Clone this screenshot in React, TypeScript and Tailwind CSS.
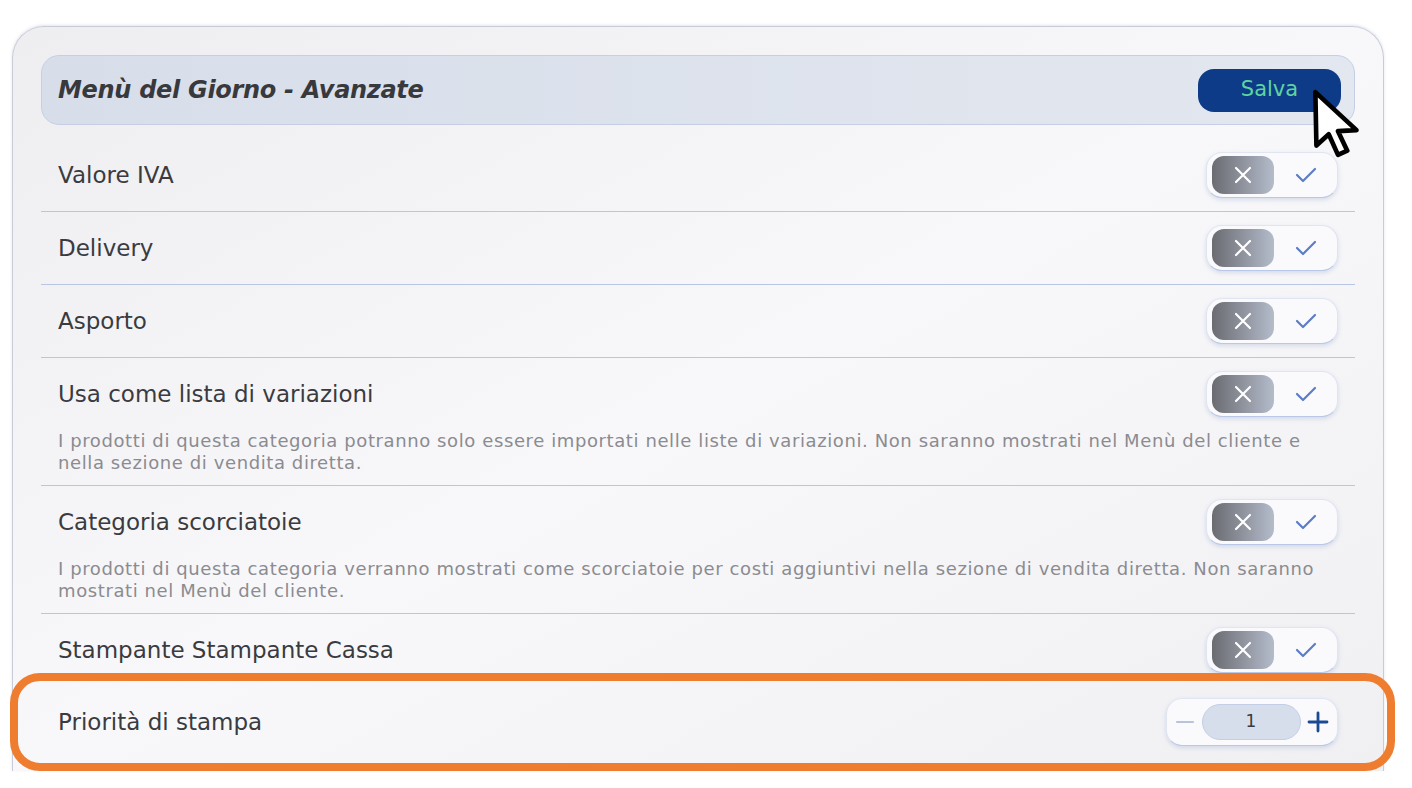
import React from 'react';

const font = { fontFamily: '"DejaVu Sans", "Open Sans", sans-serif' };

const XIcon = () => (
  <svg width="20" height="20" viewBox="0 0 20 20" fill="none">
    <path d="M3 3 L17 17 M17 3 L3 17" stroke="white" strokeWidth="2.2" strokeLinecap="round" />
  </svg>
);

const CheckIcon = () => (
  <svg width="22" height="18" viewBox="0 0 22 18" fill="none">
    <path d="M2 9 L8 15 L20 3" stroke="#5a7ec6" strokeWidth="2.2" strokeLinecap="round" strokeLinejoin="round" />
  </svg>
);

const Toggle = () => (
  <div className="flex h-[46px] w-[132px] shrink-0 items-center rounded-[16px] border border-[#dfe5f1] border-b-[#b9c8e6] bg-[#fafafc] pl-[5px] shadow-[0_2px_4px_rgba(120,140,190,0.25)]">
    <div className="flex h-[38px] w-[62px] items-center justify-center rounded-[12px] bg-gradient-to-r from-[#6b6c72] to-[#b4bccb]">
      <XIcon />
    </div>
    <div className="flex flex-1 items-center justify-center">
      <CheckIcon />
    </div>
  </div>
);

const Stepper = () => (
  <div className="flex h-[48px] w-[172px] shrink-0 items-center justify-between rounded-[16px] border border-[#dfe5f1] border-b-[#b9c8e6] bg-[#fafafc] px-[8px] shadow-[0_2px_4px_rgba(120,140,190,0.25)]">
    <svg width="20" height="20" viewBox="0 0 20 20">
      <path d="M2 10 H18" stroke="#b8c4da" strokeWidth="2.2" strokeLinecap="round" />
    </svg>
    <div className="flex h-[36px] w-[99px] items-center justify-center rounded-full border border-[#c3cfe6] bg-[#d6deeb] text-[17px] text-[#3a3b40]">
      1
    </div>
    <svg width="22" height="22" viewBox="0 0 22 22">
      <path d="M2 11 H20 M11 2 V20" stroke="#1b4a94" strokeWidth="2.8" strokeLinecap="round" />
    </svg>
  </div>
);

type Row = { label: string; desc?: string };

const rows: Row[] = [
  { label: 'Valore IVA' },
  { label: 'Delivery' },
  { label: 'Asporto' },
  {
    label: 'Usa come lista di variazioni',
    desc: 'I prodotti di questa categoria potranno solo essere importati nelle liste di variazioni. Non saranno mostrati nel Menù del cliente e nella sezione di vendita diretta.',
  },
  {
    label: 'Categoria scorciatoie',
    desc: 'I prodotti di questa categoria verranno mostrati come scorciatoie per costi aggiuntivi nella sezione di vendita diretta. Non saranno mostrati nel Menù del cliente.',
  },
  { label: 'Stampante Stampante Cassa' },
];

export default function App() {
  return (
    <div className="min-h-[788px] w-[1412px] bg-white pt-[26px] pl-[12px]" style={font}>
      <div className="relative w-[1372px] rounded-t-[32px] border border-b-0 border-[#c9ccd8] bg-gradient-to-br from-[#eeeef1] via-[#f8f8fa] to-[#f0f0f3] px-[28px] pt-[28px] shadow-[0_-1px_3px_rgba(140,150,180,0.25)]">
        {/* header */}
        <div className="flex h-[70px] items-center justify-between rounded-[18px] border border-[#c4cfe6] bg-gradient-to-r from-[#d7deea] to-[#e3e7ef] pl-[16px] pr-[13px]">
          <h1 className="text-[24px] font-bold italic tracking-[-0.3px] text-[#38393d]">Menù del Giorno - Avanzate</h1>
          <button className="h-[43px] w-[143px] rounded-[16px] bg-[#0e3b87] text-[21px] text-[#5fd3a0]">Salva</button>
        </div>
        <svg className="absolute left-[1299px] top-[62px]" width="52" height="72" viewBox="0 0 50 70">
          <path
            d="M3 3 L4 55 L16 44 L25 64 L34 60 L25 41 L43 40 Z"
            fill="white"
            stroke="black"
            strokeWidth="4.5"
            strokeLinejoin="round"
          />
        </svg>

        {/* rows */}
        <div className="mt-[14px] flex flex-col">
          {rows.map((r, i) => (
            <div
              key={r.label}
              className={`flex flex-col pt-[13px] ${r.desc ? 'pb-[11px]' : 'pb-[13px]'} ${i === rows.length - 1 ? '' : 'border-b border-[#b8c6e3]'}`}
            >
              <div className="flex items-center justify-between px-[17px]">
                <span className="text-[23px] text-[#3a3b40]">{r.label}</span>
                <Toggle />
              </div>
              {r.desc && (
                <p className="mt-[13px] px-[17px] text-[18px] leading-[22px] tracking-[0.6px] text-[#8b8b90]">{r.desc}</p>
              )}
            </div>
          ))}
        </div>

        {/* highlighted row */}
        <div className="relative -mt-[13px] -ml-[31px] -mr-[40px] -mb-[10px] flex h-[98px] items-center justify-between rounded-[30px] border-[8px] border-[#ee7d30] pl-[40px] pr-[49px]">
          <span className="text-[23px] text-[#3a3b40]">Priorità di stampa</span>
          <Stepper />
        </div>
      </div>
    </div>
  );
}
